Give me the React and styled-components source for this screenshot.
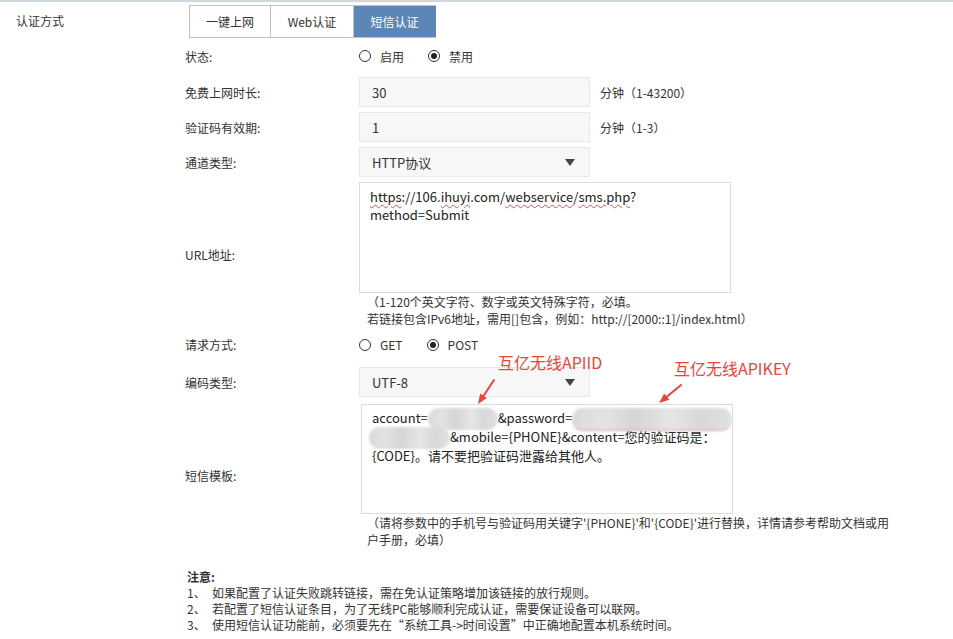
import React from "react";
import styled, { createGlobalStyle } from "styled-components";

const GlobalStyle = createGlobalStyle`
  body {
    margin: 0;
    background: #ffffff;
    font-family: "Noto Sans CJK SC", "Noto Sans", sans-serif;
    font-size: 12px;
    color: #333333;
  }
`;

const Page = styled.div`
  width: 953px;
  height: 637px;
  border-top: 2px solid #cfd7e1;
  overflow: hidden;
`;

const TopRow = styled.div`
  display: flex;
  align-items: center;
  padding: 3px 0 0 16px;
`;

const TopLabel = styled.div`
  width: 173px;
  font-size: 12px;
  margin-top: -2px;
`;

const Tabs = styled.div`
  display: flex;
  border: 1px solid #c2c2c2;
  border-right: none;
`;

const Tab = styled.div`
  width: ${(p) => p.w}px;
  height: 31px;
  display: flex;
  align-items: center;
  justify-content: center;
  font-size: 12px;
  border-right: 1px solid ${(p) => (p.active ? "#5b86b5" : "#c2c2c2")};
  background: ${(p) => (p.active ? "#5b86b5" : "#ffffff")};
  color: ${(p) => (p.active ? "#ffffff" : "#333333")};
`;

const Section = styled.div`
  margin-left: 185px;
  position: relative;
`;

const Form = styled.div`
  display: grid;
  grid-template-columns: 174px auto;
  row-gap: 5px;
  margin-top: 4px;
`;

const Label = styled.div`
  align-self: center;
  font-size: 12px;
  padding-bottom: ${(p) => p.pb || 0}px;
`;

const Control = styled.div`
  display: flex;
  flex-direction: ${(p) => (p.column ? "column" : "row")};
  align-items: ${(p) => (p.column ? "flex-start" : "center")};
  min-height: 30px;
  box-sizing: border-box;
  position: relative;
  margin-top: ${(p) => p.mt || 0}px;
  padding-bottom: ${(p) => p.pb || 0}px;
`;

const Radios = styled.div`
  display: flex;
  align-items: center;
  gap: 24px;
`;

const RadioItem = styled.label`
  display: flex;
  align-items: center;
  gap: 9px;
  font-size: 12px;
`;

const RadioCircle = styled.span`
  width: 12px;
  height: 12px;
  box-sizing: border-box;
  border: 1px solid #333333;
  border-radius: 50%;
  display: flex;
  align-items: center;
  justify-content: center;
  &::after {
    content: "";
    width: 6px;
    height: 6px;
    border-radius: 50%;
    background: ${(p) => (p.checked ? "#222222" : "transparent")};
  }
`;

const Input = styled.div`
  width: 231px;
  height: 30px;
  box-sizing: border-box;
  background: #f7f7f7;
  border: 1px solid #e8e8e8;
  padding: 0 12px;
  display: flex;
  align-items: center;
  justify-content: space-between;
  font-size: 13px;
  color: #333333;
`;

const Caret = styled.span`
  width: 0;
  height: 0;
  border-left: 5px solid transparent;
  border-right: 5px solid transparent;
  border-top: 7px solid #444444;
  margin-right: 2px;
`;

const Unit = styled.span`
  margin-left: 10px;
  font-size: 12px;
`;

const TextArea = styled.div`
  width: ${(p) => p.w}px;
  height: ${(p) => p.h}px;
  box-sizing: border-box;
  border: 1px solid #dcdcdc;
  background: #ffffff;
  padding: ${(p) => p.pt}px 10px 0 10px;
  font-size: 13px;
  line-height: 18px;
  color: #222222;
  margin-left: ${(p) => p.ml || 0}px;
`;

const Line = styled.div`
  white-space: nowrap;
  height: ${(p) => p.h || 18}px;
`;

const Spell = styled.span`
  text-decoration: underline wavy #e05050;
  text-decoration-thickness: 1px;
  text-underline-offset: 2px;
`;

const Blob = styled.span`
  display: inline-block;
  width: ${(p) => p.w}px;
  height: 22px;
  vertical-align: middle;
  margin: -4px 0 -4px ${(p) => p.ml || 0}px;
  border-radius: 11px;
  background: linear-gradient(
    90deg,
    #dadada 0%,
    #e3e3e3 20%,
    #d5d5d5 40%,
    #e6e6e6 62%,
    #d8d8d8 80%,
    #e1e1e1 100%
  );
  filter: blur(1.2px);
  border-bottom: ${(p) => (p.wavy ? "1px dotted #e07070" : "none")};
`;

const Hint = styled.div`
  font-size: 12px;
  line-height: 17px;
  padding-left: 8px;
  white-space: nowrap;
`;

const Annotation = styled.div`
  position: absolute;
  left: ${(p) => p.x}px;
  top: ${(p) => p.y}px;
  color: #e8453c;
  font-size: 16px;
  line-height: 20px;
  white-space: nowrap;
  z-index: 2;
`;

const ArrowSvg = styled.svg`
  position: absolute;
  left: ${(p) => p.x}px;
  top: ${(p) => p.y}px;
  z-index: 2;
`;

const Notes = styled.div`
  margin: 21px 0 0 2px;
  font-size: 12px;
  line-height: 16px;
`;

const NotesTitle = styled.div`
  font-weight: bold;
`;

const NoteItem = styled.div`
  display: flex;
`;

const NoteNum = styled.span`
  width: 25px;
  flex-shrink: 0;
`;

const Radio = ({ checked, children }) => (
  <RadioItem>
    <RadioCircle checked={checked} />
    {children}
  </RadioItem>
);

const notes = [
  "如果配置了认证失败跳转链接，需在免认证策略增加该链接的放行规则。",
  "若配置了短信认证条目，为了无线PC能够顺利完成认证，需要保证设备可以联网。",
  "使用短信认证功能前，必须要先在“系统工具->时间设置”中正确地配置本机系统时间。",
];

export default function App() {
  return (
    <>
      <GlobalStyle />
      <Page>
        <TopRow>
          <TopLabel>认证方式</TopLabel>
          <Tabs>
            <Tab w={80}>一键上网</Tab>
            <Tab w={82}>Web认证</Tab>
            <Tab w={81} active>
              短信认证
            </Tab>
          </Tabs>
        </TopRow>

        <Section>
          <Form>
            <Label pb={2}>状态:</Label>
            <Control pb={2}>
              <Radios>
                <Radio>启用</Radio>
                <Radio checked>禁用</Radio>
              </Radios>
            </Control>

            <Label>免费上网时长:</Label>
            <Control>
              <Input>30</Input>
              <Unit>分钟（1-43200）</Unit>
            </Control>

            <Label>验证码有效期:</Label>
            <Control>
              <Input>1</Input>
              <Unit>分钟（1-3）</Unit>
            </Control>

            <Label>通道类型:</Label>
            <Control>
              <Input>
                HTTP协议
                <Caret />
              </Input>
            </Control>

            <Label>URL地址:</Label>
            <Control column>
              <TextArea w={372} h={111} pt={5}>
                <Line>
                  <Spell>https</Spell>://106.<Spell>ihuyi</Spell>.com/
                  <Spell>webservice</Spell>/<Spell>sms.php</Spell>?
                </Line>
                <Line>method=Submit</Line>
              </TextArea>
              <Hint>
                （1-120个英文字符、数字或英文特殊字符，必填。
                <br />
                若链接包含IPv6地址，需用[]包含，例如：http://[2000::1]/index.html）
              </Hint>
            </Control>

            <Label pb={5}>请求方式:</Label>
            <Control pb={5}>
              <Radios>
                <Radio>GET</Radio>
                <Radio checked>POST</Radio>
              </Radios>
            </Control>

            <Label>编码类型:</Label>
            <Control>
              <Input>
                UTF-8
                <Caret />
              </Input>
              <Annotation x={139} y={-15}>
                互亿无线APIID
              </Annotation>
              <Annotation x={315} y={-9}>
                互亿无线APIKEY
              </Annotation>
              <ArrowSvg x={114} y={10} width="26" height="30" viewBox="0 0 26 30">
                <line x1="21" y1="3" x2="10.6" y2="18.7" stroke="#e8453c" strokeWidth="2" strokeLinecap="round" />
                <polygon points="5,27 13.9,20.9 7.2,16.4" fill="#e8453c" />
              </ArrowSvg>
              <ArrowSvg x={296} y={15} width="30" height="24" viewBox="0 0 30 24">
                <line x1="26" y1="3" x2="11.8" y2="14.7" stroke="#e8453c" strokeWidth="2" strokeLinecap="round" />
                <polygon points="4,21 14.3,17.8 9.2,11.6" fill="#e8453c" />
              </ArrowSvg>
            </Control>

            <Label>短信模板:</Label>
            <Control column mt={2}>
              <TextArea w={372} h={110} pt={4} ml={2}>
                <Line h={19}>
                  account=
                  <Blob w={70} />
                  &amp;password=
                  <Blob w={160} wavy />
                </Line>
                <Line h={19}>
                  <Blob w={81} ml={-3} />
                  &amp;mobile={"{PHONE}"}&amp;content=您的验证码是：
                </Line>
                <Line>{"{CODE}"}。请不要把验证码泄露给其他人。</Line>
              </TextArea>
              <Hint>
                （请将参数中的手机号与验证码用关键字'{"{PHONE}"}'和'{"{CODE}"}'进行替换，详情请参考帮助文档或用
                <br />
                户手册，必填）
              </Hint>
            </Control>
          </Form>

          <Notes>
            <NotesTitle>注意:</NotesTitle>
            {notes.map((n, i) => (
              <NoteItem key={i}>
                <NoteNum>{i + 1}、</NoteNum>
                {n}
              </NoteItem>
            ))}
          </Notes>
        </Section>
      </Page>
    </>
  );
}
